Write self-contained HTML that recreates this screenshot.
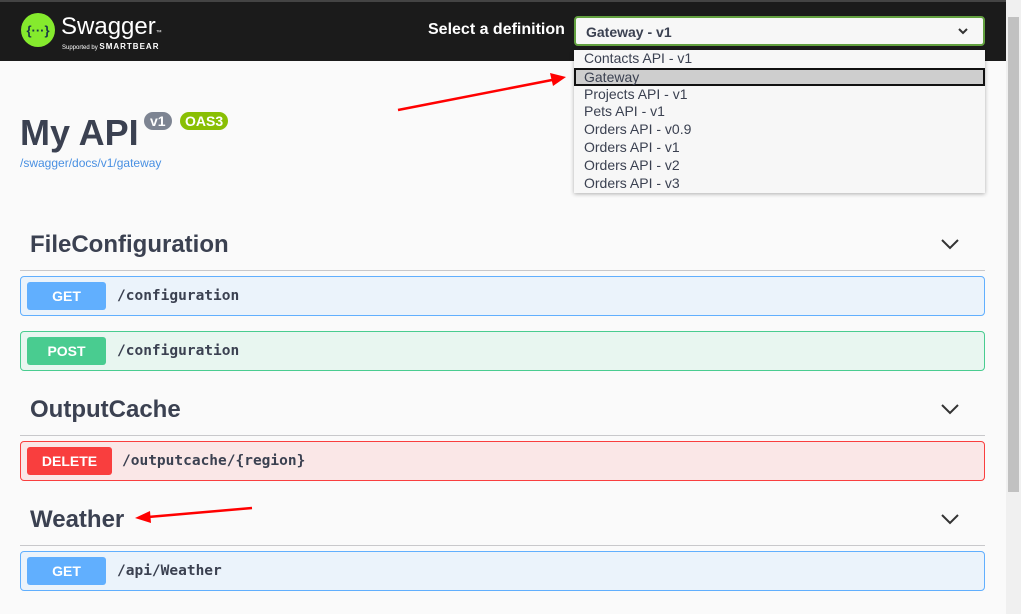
<!DOCTYPE html>
<html><head><meta charset="utf-8"><style>
*{box-sizing:border-box;margin:0;padding:0}
body{width:1021px;height:614px;overflow:hidden;background:#fafafa;font-family:"Liberation Sans",sans-serif;position:relative;color:#3b4151}
.hdr{position:absolute;left:0;top:0;width:1006px;height:61px;background:#1b1b1b;border-top:2px solid #444}
.sb{position:absolute;right:0;top:0;width:15px;height:614px;background:#f0f0f0}
.sb div{position:absolute;left:2px;top:17px;width:11px;height:475px;background:#c1c1c1}
.abs{position:absolute}
.sel{left:574px;top:16px;width:411px;height:30px;border:2px solid #62a03f;border-radius:4px;background:#f7f7f7;font-weight:bold;font-size:14px;padding:6px 10px;color:#3b4151}
.dd{left:574px;top:50px;width:411px;height:143px;background:#f7f7f7;box-shadow:0 1px 4px rgba(0,0,0,.3);font-size:14px;color:#3b4151}
.dd div{height:17.8px;line-height:17.8px;padding-left:10px}
.dd .hl{background:#cecece;border:2px solid #111;padding-left:8px;line-height:14px}
h2{position:absolute;left:30px;font-size:24px;font-weight:bold;color:#3b4151}
.line{position:absolute;left:20px;width:965px;height:1px;background:#c8c8cb}
.op{position:absolute;left:20px;width:965px;height:40px;border:1px solid;border-radius:4px}
.op .m{position:absolute;left:6px;top:5px;height:28px;border-radius:3px;color:#fff;font-weight:bold;font-size:14px;text-align:center;line-height:28px}
.op .p{position:absolute;top:11px;font-family:"DejaVu Sans Mono","Liberation Mono",monospace;font-weight:bold;font-size:14.5px;color:#3b4151}
.get{background:#ebf3fb;border-color:#61affe}.get .m{background:#61affe;width:79px}
.post{background:#e8f6f0;border-color:#49cc90}.post .m{background:#49cc90;width:79px}
.del{background:#fae7e7;border-color:#f93e3e}.del .m{background:#f93e3e;width:85px}
.chev{position:absolute;left:940px}
</style></head><body>
<div class="hdr"></div>
<svg class="abs" style="left:20px;top:12px" width="36" height="36"><circle cx="18" cy="18" r="17" fill="#85ea2d"/><text x="18" y="23" text-anchor="middle" font-family="Liberation Sans" font-size="13" font-weight="bold" fill="#173647">{···}</text></svg>
<div class="abs" style="left:61px;top:13px;color:#fff;font-size:24px">Swagger<span style="font-size:6px">™</span></div>
<div class="abs" style="left:62px;top:42px;color:#fff;font-size:6px">Supported by <b style="font-size:8px;letter-spacing:1px">SMARTBEAR</b></div>
<div class="abs" style="left:428px;top:21px;color:#fff;font-weight:bold;font-size:16px">Select a definition</div>
<div class="abs sel">Gateway - v1</div>
<svg class="abs" style="left:957px;top:26px" width="12" height="10"><path d="M2 3l4 4 4-4" stroke="#333" stroke-width="2" fill="none"/></svg>
<div class="abs dd"><div>Contacts API - v1</div><div class="hl">Gateway</div><div>Projects API - v1</div><div>Pets API - v1</div><div>Orders API - v0.9</div><div>Orders API - v1</div><div>Orders API - v2</div><div>Orders API - v3</div></div>
<div class="abs" style="left:20px;top:112px;font-size:36px;font-weight:bold">My API</div>
<div class="abs" style="left:144px;top:112px;background:#7d8492;color:#fff;font-weight:bold;font-size:14px;border-radius:10px;padding:1px 6px">v1</div>
<div class="abs" style="left:180px;top:112px;background:#89bf04;color:#fff;font-weight:bold;font-size:14px;border-radius:10px;padding:1px 5px">OAS3</div>
<div class="abs" style="left:20px;top:156px;font-size:12px;color:#4990e2">/swagger/docs/v1/gateway</div>
<h2 style="top:231px">FileConfiguration</h2><div class="line" style="top:270px"></div>
<svg class="chev" style="top:237px" width="20" height="14"><path d="M2 3l8 8 8-8" stroke="#333" stroke-width="2" fill="none"/></svg>
<div class="op get" style="top:276px"><div class="m">GET</div><div class="p" style="left:96px">/configuration</div></div>
<div class="op post" style="top:331px"><div class="m">POST</div><div class="p" style="left:96px">/configuration</div></div>
<h2 style="top:396px">OutputCache</h2><div class="line" style="top:435px"></div>
<svg class="chev" style="top:402px" width="20" height="14"><path d="M2 3l8 8 8-8" stroke="#333" stroke-width="2" fill="none"/></svg>
<div class="op del" style="top:441px"><div class="m">DELETE</div><div class="p" style="left:101px">/outputcache/{region}</div></div>
<h2 style="top:506px">Weather</h2><div class="line" style="top:545px"></div>
<svg class="chev" style="top:512px" width="20" height="14"><path d="M2 3l8 8 8-8" stroke="#333" stroke-width="2" fill="none"/></svg>
<div class="op get" style="top:551px"><div class="m">GET</div><div class="p" style="left:96px">/api/Weather</div></div>
<svg class="abs" style="left:0;top:0" width="1006" height="614"><g stroke="#f00" stroke-width="2.5" fill="#f00"><line x1="398" y1="110" x2="552" y2="80"/><polygon points="566,77 550,73 553,86" stroke="none"/><line x1="252" y1="508" x2="148" y2="517"/><polygon points="135,518 150,511 151,523" stroke="none"/></g></svg>
<div class="sb"><div></div></div>
</body></html>
